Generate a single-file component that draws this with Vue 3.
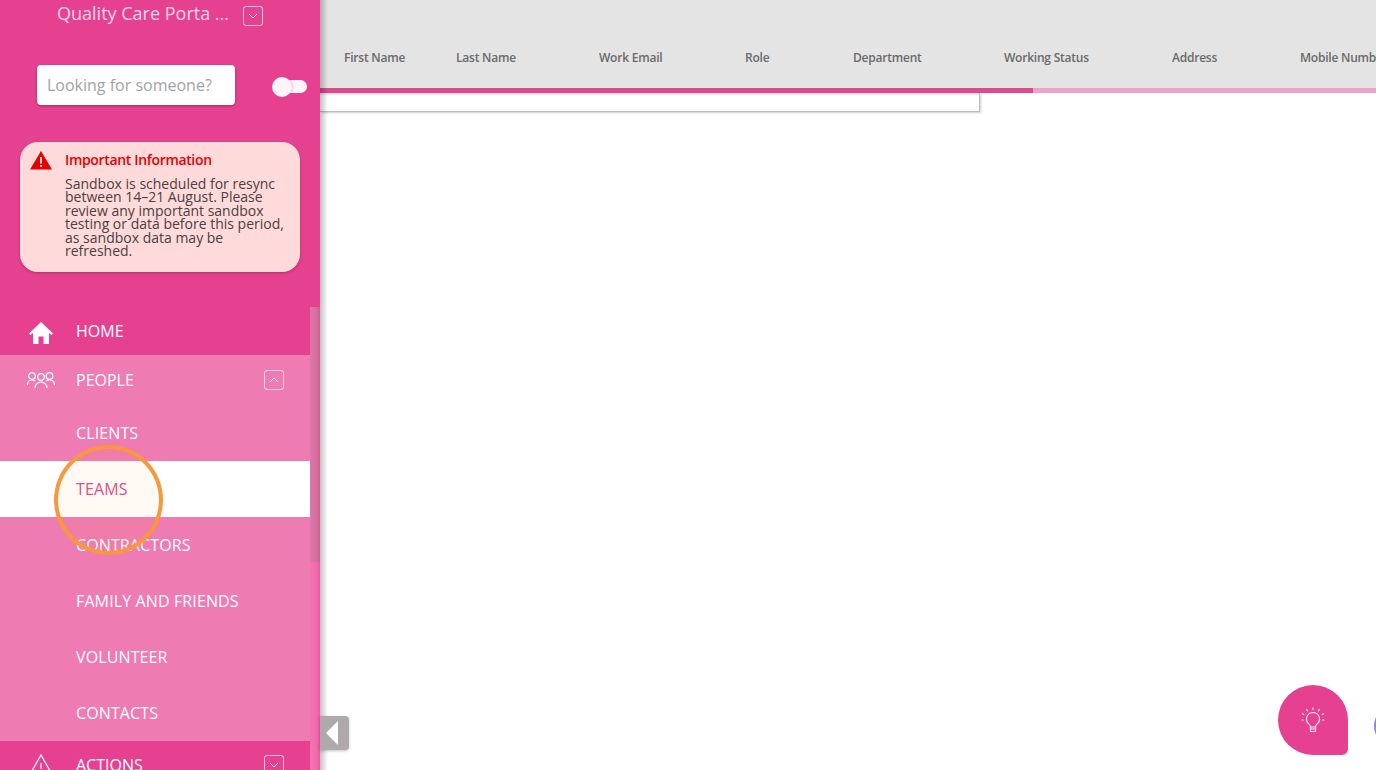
<script setup>
const subs = [
  { label: 'CLIENTS', active: false },
  { label: 'TEAMS', active: true },
  { label: 'CONTRACTORS', active: false },
  { label: 'FAMILY AND FRIENDS', active: false },
  { label: 'VOLUNTEER', active: false },
  { label: 'CONTACTS', active: false },
]
const columns = [
  { label: 'First Name', width: 112 },
  { label: 'Last Name', width: 143 },
  { label: 'Work Email', width: 146 },
  { label: 'Role', width: 108 },
  { label: 'Department', width: 151 },
  { label: 'Working Status', width: 168 },
  { label: 'Address', width: 128 },
  { label: 'Mobile Number', width: 120 },
]
</script>

<template>
  <div class="page">
    <aside class="sidebar">
      <div class="brand">
        <span class="brand-name">Quality Care Porta ...</span>
        <span class="chev-box brand-chev">
          <svg viewBox="0 0 20 20" width="20" height="20"><path d="M6 8l4 4 4-4" /></svg>
        </span>
      </div>
      <div class="search-row">
        <div class="search">Looking for someone?</div>
        <div class="toggle"><span class="knob"></span></div>
      </div>
      <div class="notice">
        <svg class="warn" viewBox="0 0 24 20" width="24" height="20">
          <path d="M12 1L23 19.500H1z" fill="#e60000" />
          <rect x="11" y="7" width="2" height="6.500" fill="#ffdada" />
          <rect x="11" y="15" width="2" height="2" fill="#ffdada" />
        </svg>
        <div class="notice-body">
          <div class="notice-title">Important Information</div>
          <p class="notice-text">Sandbox is scheduled for resync between 14–21 August. Please review any important sandbox testing or data before this period, as sandbox data may be refreshed.</p>
        </div>
      </div>

      <div class="menu-area">
        <nav class="menu">
          <div class="item home">
            <svg class="item-icon" viewBox="0 0 26 24" width="26" height="24">
              <path d="M13 1L25 12.500 23.500 14 21 12V23h-5.500v-7.500h-5V23H5V12L2.500 14 1 12.500z" fill="#fff" />
            </svg>
            <span>HOME</span>
          </div>
          <div class="group">
            <div class="item people">
              <svg class="item-icon line" viewBox="0 0 28 16" width="28" height="16">
                <circle cx="5" cy="4" r="3.300" />
                <circle cx="14" cy="5" r="3.300" />
                <circle cx="22.500" cy="4" r="3.300" />
                <path d="M.5 13c0-3 2-5 4.500-5 1.300 0 2.400.3 3.200 1" />
                <path d="M27.500 13c0-3-2-5-5-5-1.300 0-2.400.3-3.200 1" />
                <path d="M8 16c0-3 2.500-6 6-6s6 3 6 6" />
              </svg>
              <span>PEOPLE</span>
              <span class="chev-box item-chev">
                <svg viewBox="0 0 20 20" width="20" height="20"><path d="M6 12l4-4 4 4" /></svg>
              </span>
            </div>
            <div v-for="s in subs" :key="s.label" class="sub" :class="{ active: s.active }">{{ s.label }}</div>
          </div>
          <div class="item actions">
            <svg class="item-icon line" viewBox="0 0 26 24" width="26" height="24">
              <path d="M13 2L25 23H1z" />
              <path d="M13 10v6M13 18.500v1.500" />
            </svg>
            <span>ACTIONS</span>
            <span class="chev-box item-chev">
              <svg viewBox="0 0 20 20" width="20" height="20"><path d="M6 8l4 4 4-4" /></svg>
            </span>
          </div>
        </nav>
        <div class="scrollbar"><div class="thumb"></div></div>
      </div>
      <div class="circle"></div>
    </aside>

    <main class="content">
      <div class="head">
        <div class="cols">
          <div v-for="c in columns" :key="c.label" class="col" :style="{ width: c.width + 'px' }">{{ c.label }}</div>
        </div>
      </div>
      <div class="progress"><div class="progress-fill"></div></div>
      <div class="empty-row"></div>
      <button class="collapse"><span class="tri"></span></button>
      <div class="bulb">
        <svg viewBox="0 0 28 28" width="28" height="28">
          <path d="M14 6.500a6.500 6.500 0 0 0-4 11.600c.9.800 1.400 1.600 1.500 2.900h5c.1-1.300.6-2.100 1.500-2.900a6.500 6.500 0 0 0-4-11.600z" />
          <path d="M11.500 21v4.500h5V21M11.500 23h5" />
          <path d="M14 1.500v2.500M7.500 3l1.200 2.200M20.500 3l-1.200 2.200M3 7.500l2.200 1.200M25 7.500l-2.200 1.200M2.500 14h2.300M23.200 14h2.300" />
        </svg>
      </div>
      <div class="peek"></div>
    </main>
  </div>
</template>

<style>
html, body { margin: 0; overflow: hidden; background: #fff; }
</style>

<style scoped>
.page {
  display: flex;
  width: 1376px;
  height: 770px;
  overflow: hidden;
  font-family: "Open Sans", sans-serif;
}
.sidebar {
  position: relative;
  z-index: 2;
  flex: none;
  display: flex;
  flex-direction: column;
  width: 320px;
  height: 770px;
  overflow: hidden;
  background: #e64190;
}
.content::before {
  content: "";
  position: absolute;
  left: 0;
  top: 0;
  bottom: 0;
  width: 8px;
  z-index: 1;
  background: linear-gradient(90deg, rgba(0, 0, 0, .24), rgba(0, 0, 0, 0));
}
.brand {
  display: flex;
  align-items: center;
  height: 28px;
  padding-left: 57px;
  flex: none;
}
.brand-name { font-size: 18px; line-height: 26px; height: 26px; margin-bottom: 2px; color: #fcd5e8; white-space: nowrap; }
.chev-box {
  display: block;
  width: 18px;
  height: 18px;
  border: 1px solid rgba(255, 255, 255, .7);
  border-radius: 3px;
}
.chev-box svg { display: block; margin: -1px; fill: none; stroke: #fff; stroke-width: 1; opacity: .85; }
.brand-chev { margin-left: 14px; margin-top: 3px; }
.search-row {
  display: flex;
  align-items: center;
  flex: none;
  margin-top: 37px;
  padding-left: 37px;
}
.search {
  box-sizing: border-box;
  width: 198px;
  height: 40px;
  padding-left: 10px;
  background: #fff;
  border-radius: 4px;
  box-shadow: 0 1px 3px rgba(0, 0, 0, .3);
  font-size: 16px;
  line-height: 40px;
  color: #a3a3a3;
}
.toggle {
  position: relative;
  width: 26px;
  height: 13px;
  margin: 2px 0 0 46px;
  background: #fff;
  border-radius: 7px;
  opacity: .95;
}
.knob {
  position: absolute;
  left: -9px;
  top: -3px;
  width: 20px;
  height: 20px;
  background: #fff;
  border-radius: 50%;
  box-shadow: 1px 0 2px rgba(230, 65, 144, .35);
}
.notice {
  display: flex;
  flex: none;
  box-sizing: border-box;
  width: 280px;
  height: 130px;
  margin: 37px 0 0 20px;
  padding: 8px 14px 0 9px;
  background: #ffdada;
  border-radius: 18px;
  box-shadow: 0 1px 3px rgba(0, 0, 0, .25);
}
.warn { flex: none; margin-top: 0; }
.notice-body { margin-left: 12px; min-width: 0; }
.notice-title {
  font-size: 14px;
  font-weight: 600;
  line-height: 20px;
  color: #e60000;
  letter-spacing: -.34px;
}
.notice-text {
  margin: 7px 0 0;
  font-size: 14px;
  line-height: 13.400px;
  color: #4a4040;
}
.menu-area {
  position: relative;
  flex: 1;
  margin-top: 35px;
  min-height: 0;
}
.menu { width: 310px; }
.item {
  display: flex;
  align-items: center;
  height: 48px;
  font-size: 16px;
  color: #fff;
}
.item > span:not(.chev-box) { margin-left: 76px; }
.item-icon { position: absolute; left: 28px; }
.line { fill: none; stroke: #fff; stroke-width: 1.200; }
.people .item-icon { left: 27px; }
.home .item-icon { margin-top: 4px; }
.item-chev { margin-left: auto; margin-right: 26px; }
.group { background: #ee7bb1; }
.people { height: 50px; }
.sub {
  box-sizing: border-box;
  height: 56px;
  padding-left: 76px;
  font-size: 16px;
  line-height: 56px;
  color: #fff;
  letter-spacing: .12px;
}
.sub.active { background: #fff; color: #dc4c8e; }
.scrollbar {
  position: absolute;
  right: 0;
  top: 0;
  bottom: 0;
  width: 10px;
  background: linear-gradient(90deg, #f075b3, #f46cae 60%, #e85a9e);
}
.thumb {
  height: 255px;
  background: linear-gradient(90deg, #db79a9, #d96da2 60%, #c9628f);
}
.circle {
  position: absolute;
  left: 54px;
  top: 445px;
  box-sizing: border-box;
  width: 109px;
  height: 110px;
  border: 4.500px solid #f7983c;
  border-radius: 50%;
  background: rgba(255, 153, 51, .06);
}
.content { position: relative; flex: 1; min-width: 0; }
.head { height: 88px; background: #e4e4e4; overflow: hidden; }
.cols {
  display: flex;
  align-items: center;
  box-sizing: border-box;
  height: 100%;
  padding: 27px 0 0 24px;
}
.col {
  flex: none;
  font-size: 12px;
  font-weight: 600;
  color: #6a6a6a;
  white-space: nowrap;
  letter-spacing: -.22px;
}
.progress { height: 5px; background: #efa3c6; }
.progress-fill { width: 713px; height: 100%; background: #dd4b8c; }
.empty-row {
  width: 659px;
  height: 18px;
  border-bottom: 1px solid #bdbdbd;
  border-right: 1px solid #bdbdbd;
  box-shadow: 1px 1px 2px rgba(0, 0, 0, .2), inset 0 3px 3px -2px rgba(0, 0, 0, .18);
}
.collapse {
  position: absolute;
  z-index: 2;
  left: 0;
  top: 716px;
  width: 29px;
  height: 34px;
  padding: 0;
  border: 0;
  border-radius: 0 4px 4px 0;
  background: #b0a9ab;
  box-shadow: 0 1px 3px rgba(0, 0, 0, .25);
}
.tri {
  display: block;
  width: 0;
  height: 0;
  margin-left: 6px;
  border-style: solid;
  border-width: 12px 12px 12px 0;
  border-color: transparent #fff transparent transparent;
}
.bulb {
  position: absolute;
  left: 958px;
  top: 685px;
  display: flex;
  align-items: center;
  justify-content: center;
  width: 70px;
  height: 70px;
  background: #e64190;
  border-radius: 50% 50% 6px 50%;
}
.bulb svg { fill: none; stroke: #fde3ef; stroke-width: 1.200; }
.peek {
  position: absolute;
  left: 1054px;
  top: 706px;
  width: 40px;
  height: 40px;
  border-radius: 50%;
  background: #8585e8;
}
</style>
